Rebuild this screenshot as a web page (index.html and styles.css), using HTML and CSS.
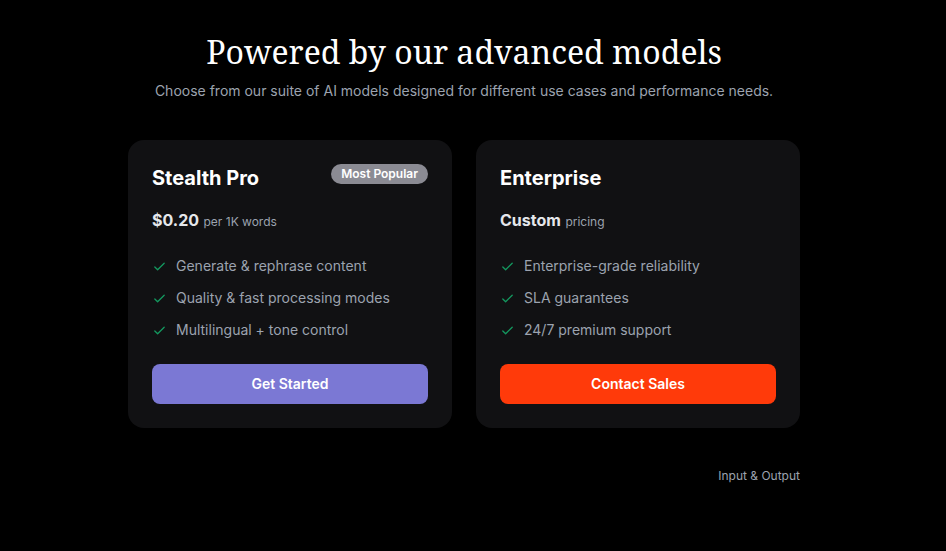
FILE: index.html
```html
<!DOCTYPE html>
<html lang="en">
<head>
    <meta charset="UTF-8">
    <title>Models</title>
    <link rel="stylesheet" href="styles.css">
</head>
<body>
    <section class="models">
        <h1 class="models-title">Powered by our advanced models</h1>
        <p class="models-sub">Choose from our suite of AI models designed for different use cases and performance needs.</p>

        <div class="plans">
            <div class="plan">
                <div class="plan-head">
                    <h2 class="plan-name">Stealth Pro</h2>
                    <span class="badge">Most Popular</span>
                </div>
                <div class="price"><strong>$0.20</strong> <span>per 1K words</span></div>
                <ul class="features">
                    <li><svg class="check" viewBox="0 0 16 16"><path d="M3 8.5l3 3 7-7"/></svg>Generate &amp; rephrase content</li>
                    <li><svg class="check" viewBox="0 0 16 16"><path d="M3 8.5l3 3 7-7"/></svg>Quality &amp; fast processing modes</li>
                    <li><svg class="check" viewBox="0 0 16 16"><path d="M3 8.5l3 3 7-7"/></svg>Multilingual + tone control</li>
                </ul>
                <button class="btn btn-purple">Get Started</button>
            </div>

            <div class="plan">
                <div class="plan-head">
                    <h2 class="plan-name">Enterprise</h2>
                </div>
                <div class="price"><strong>Custom</strong> <span>pricing</span></div>
                <ul class="features">
                    <li><svg class="check" viewBox="0 0 16 16"><path d="M3 8.5l3 3 7-7"/></svg>Enterprise-grade reliability</li>
                    <li><svg class="check" viewBox="0 0 16 16"><path d="M3 8.5l3 3 7-7"/></svg>SLA guarantees</li>
                    <li><svg class="check" viewBox="0 0 16 16"><path d="M3 8.5l3 3 7-7"/></svg>24/7 premium support</li>
                </ul>
                <button class="btn btn-orange">Contact Sales</button>
            </div>
        </div>

        <div class="footnote">Input &amp; Output</div>
    </section>
</body>
</html>
```

FILE: styles.css
```css
body {
    margin: 0;
    background: #000;
    font-family: Inter, "Noto Sans", sans-serif;
    color: #fff;
}

.models {
    width: 672px;
    margin: 0 auto;
    padding: 30px 18px 0 0;
}

.models-title {
    font-family: "Noto Serif", "DejaVu Serif", serif;
    font-weight: 400;
    font-size: 32px;
    text-align: center;
    margin: 0;
    line-height: 44px;
    color: #fff;
}

.models-sub {
    text-align: center;
    font-size: 14px;
    color: #9ca3af;
    margin: 7px -60px 0;
    line-height: 20px;
}

.plans {
    display: grid;
    grid-template-columns: 1fr 1fr;
    gap: 24px;
    margin-top: 39px;
}

.plan {
    background: #111113;
    border-radius: 16px;
    padding: 24px;
    display: flex;
    flex-direction: column;
}

.plan-head {
    display: flex;
    justify-content: space-between;
    align-items: flex-start;
    height: 28px;
}

.plan-name {
    margin: 0;
    font-size: 20px;
    font-weight: 700;
    line-height: 28px;
    color: #fff;
}

.badge {
    background: #8b8b93;
    color: #fff;
    font-size: 12px;
    font-weight: 600;
    line-height: 20px;
    padding: 0 10px;
    border-radius: 999px;
}

.price {
    margin-top: 16px;
    line-height: 24px;
    color: #e5e7eb;
}

.price strong {
    font-size: 16px;
    font-weight: 700;
}

.price span {
    font-size: 12px;
    color: #9ca3af;
}

.features {
    list-style: none;
    margin: 22px 0 0;
    padding: 0;
    display: flex;
    flex-direction: column;
    gap: 12px;
}

.features li {
    display: flex;
    align-items: center;
    gap: 9px;
    font-size: 14px;
    line-height: 20px;
    color: #9ca3af;
}

.check {
    width: 15px;
    height: 15px;
    fill: none;
    stroke: #14985f;
    stroke-width: 1.4;
    stroke-linecap: round;
    stroke-linejoin: round;
}

.btn {
    margin-top: 24px;
    height: 40px;
    border: none;
    border-radius: 8px;
    color: #fff;
    font-family: inherit;
    font-size: 14px;
    font-weight: 600;
    line-height: 38px;
    padding: 0;
    cursor: pointer;
}

.btn-purple {
    background: #7b78d4;
}

.btn-orange {
    background: #ff3a0a;
}

.footnote {
    text-align: right;
    font-size: 12px;
    color: #9ca3af;
    margin-top: 40px;
    line-height: 16px;
}
```
